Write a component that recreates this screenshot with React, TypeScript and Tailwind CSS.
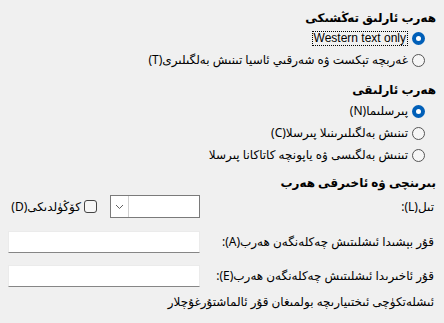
import React from "react";

const font = { fontFamily: '"Noto Sans", "DejaVu Sans", sans-serif' };

function Radio({ checked, children, className = "" }: { checked?: boolean; children: React.ReactNode; className?: string }) {
  return (
    <div className={"flex items-center h-[16px] pr-[11px] " + className}>
      {checked ? (
        <span className="w-[13px] h-[13px] rounded-full bg-[#005fb8] flex items-center justify-center shrink-0">
          <span className="w-[5px] h-[5px] rounded-full bg-white" />
        </span>
      ) : (
        <span className="w-[13px] h-[13px] rounded-full border border-[#555555] bg-[#f6f6f6] shrink-0" />
      )}
      <span className="mr-[4px] whitespace-nowrap leading-[16px]">{children}</span>
    </div>
  );
}

function Heading({ children, className = "" }: { children: React.ReactNode; className?: string }) {
  return <div className={"h-[16px] leading-[16px] font-bold whitespace-nowrap " + className}>{children}</div>;
}

export default function App() {
  return (
    <div dir="rtl" style={font} className="w-[444px] h-[323px] bg-[#f0f0f0] text-[12px] text-black pr-[8px] pl-[8px] pt-[10px] flex flex-col overflow-hidden">
      <Heading>ھەرب ئارلىق تەڭشىكى</Heading>
      <Radio checked className="mt-[4px]">
        <span dir="ltr" className="inline-block border border-dotted border-black px-[1px] leading-[13px] font-['Liberation_Sans',sans-serif]">Western text only</span>
      </Radio>
      <Radio className="mt-[6px]">غەربچە تېكست ۋە شەرقىي ئاسيا تىنىش بەلگىلىرى(T)</Radio>

      <Heading className="mt-[14px]">ھەرب ئارلىقى</Heading>
      <Radio checked className="mt-[5px]">پىرسلىما(N)</Radio>
      <Radio className="mt-[6px]">تىنىش بەلگىلىرىنىلا پىرسلا(C)</Radio>
      <Radio className="mt-[6px]">تىنىش بەلگىسى ۋە ياپونچە كاتاكانا پىرسلا</Radio>

      <Heading className="mt-[12px]">بىرىنچى ۋە ئاخىرقى ھەرب</Heading>

      <div className="mt-[4px] h-[23px] flex items-center">
        <div className="flex-1 whitespace-nowrap mr-[2px]">تىل(L):</div>
        <div className="w-[192px] flex items-center">
          <div className="w-[90px] h-[23px] bg-white border border-[#7a7a7a] flex justify-end">
            <div className="w-[18px] h-full border-r border-[#d0d0d0] flex items-center justify-center">
              <svg width="9" height="6" viewBox="0 0 9 6">
                <path d="M1 1 L4.5 4.5 L8 1" fill="none" stroke="#606060" strokeWidth="1" />
              </svg>
            </div>
          </div>
          <span className="w-[13px] h-[13px] rounded-[3px] border border-[#444444] bg-[#f6f6f6] mr-[13px] shrink-0" />
          <span className="mr-[3px] whitespace-nowrap">كۆڭۈلدىكى(D)</span>
        </div>
      </div>

      <div className="mt-[13px] h-[22px] flex items-center">
        <div className="flex-1 whitespace-nowrap mr-[2px]">قۇر بېشىدا ئىشلىتىش چەكلەنگەن ھەرب(A):</div>
        <div className="w-[192px] h-[22px] bg-white border border-[#ebebeb] border-b-[#868686]" />
      </div>

      <div className="mt-[12px] h-[22px] flex items-center">
        <div className="flex-1 whitespace-nowrap mr-[2px]">قۇر ئاخىرىدا ئىشلىتىش چەكلەنگەن ھەرب(E):</div>
        <div className="w-[192px] h-[22px] bg-white border border-[#ebebeb] border-b-[#868686]" />
      </div>

      <div className="mt-[7px] h-[16px] leading-[16px] whitespace-nowrap mr-[2px]">ئىشلەتكۈچى ئىختىيارىچە بولمىغان قۇر ئالماشتۇرغۇچلار</div>
    </div>
  );
}
